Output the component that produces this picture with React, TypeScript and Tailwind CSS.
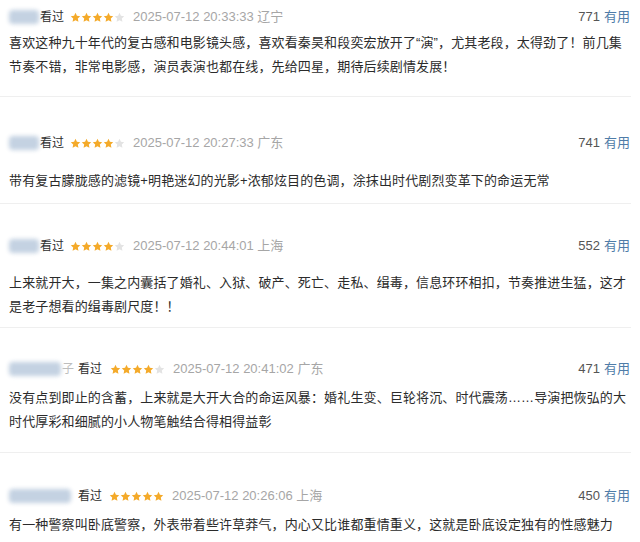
import React from "react";

type Review = {
  nameW: string;
  suffix?: string;
  seenMl: string;
  starsMl: string;
  stars: number;
  date: string;
  region: string;
  count: string;
  text: string;
  wrap: string;
  bodyMt: string;
};

const reviews: Review[] = [
  {
    nameW: "w-[30px]",
    seenMl: "ml-[1px]",
    starsMl: "ml-[6px]",
    stars: 4,
    date: "2025-07-12 20:33:33",
    region: "辽宁",
    count: "771",
    text: "喜欢这种九十年代的复古感和电影镜头感，喜欢看秦昊和段奕宏放开了“演”，尤其老段，太得劲了！前几集节奏不错，非常电影感，演员表演也都在线，先给四星，期待后续剧情发展！",
    wrap: "pt-[7px] pb-[17px] border-b border-[#efefef]",
    bodyMt: "mt-[4px]",
  },
  {
    nameW: "w-[30px]",
    seenMl: "ml-[1px]",
    starsMl: "ml-[6px]",
    stars: 4,
    date: "2025-07-12 20:27:33",
    region: "广东",
    count: "741",
    text: "带有复古朦胧感的滤镜+明艳迷幻的光影+浓郁炫目的色调，涂抹出时代剧烈变革下的命运无常",
    wrap: "pt-[36px] pb-[10px] border-b border-[#efefef]",
    bodyMt: "mt-[16px]",
  },
  {
    nameW: "w-[30px]",
    seenMl: "ml-[1px]",
    starsMl: "ml-[6px]",
    stars: 4,
    date: "2025-07-12 20:44:01",
    region: "上海",
    count: "552",
    text: "上来就开大，一集之内囊括了婚礼、入狱、破产、死亡、走私、缉毒，信息环环相扣，节奏推进生猛，这才是老子想看的缉毒剧尺度！！",
    wrap: "pt-[32px] pb-[8px] border-b border-[#efefef]",
    bodyMt: "mt-[15px]",
  },
  {
    nameW: "w-[52px]",
    suffix: "子",
    seenMl: "ml-[4px]",
    starsMl: "ml-[8px]",
    stars: 4,
    date: "2025-07-12 20:41:02",
    region: "广东",
    count: "471",
    text: "没有点到即止的含蓄，上来就是大开大合的命运风暴：婚礼生变、巨轮将沉、时代震荡……导演把恢弘的大时代厚彩和细腻的小人物笔触结合得相得益彰",
    wrap: "pt-[31px] pb-[18px] border-b border-[#efefef]",
    bodyMt: "mt-[7px]",
  },
  {
    nameW: "w-[62px]",
    seenMl: "ml-[7px]",
    starsMl: "ml-[7px]",
    stars: 5,
    date: "2025-07-12 20:26:06",
    region: "上海",
    count: "450",
    text: "有一种警察叫卧底警察，外表带着些许草莽气，内心又比谁都重情重义，这就是卧底设定独有的性感魅力",
    wrap: "pt-[33px]",
    bodyMt: "mt-[7px]",
  },
];

function Star({ filled }: { filled: boolean }) {
  return (
    <svg width="11" height="11" viewBox="0 0 24 24" className="shrink-0">
      <path
        d="M12 1.8l3.1 6.6 7.2.9-5.3 5 1.4 7.1L12 17.9l-6.4 3.5 1.4-7.1-5.3-5 7.2-.9z"
        fill={filled ? "#f4aa2a" : "#e3e3e3"}
      />
    </svg>
  );
}

export default function App() {
  return (
    <div className="w-[640px] h-[542px] overflow-hidden bg-white font-['Liberation_Sans','Noto_Sans_CJK_SC',sans-serif] text-[13px]">
      {reviews.map((r, i) => (
        <div key={i} className={`mr-[9px] pl-[9px] pr-[1px] ${r.wrap}`}>
          <div className="flex h-5 items-center leading-5">
            <div className="flex items-center">
              <div className={`h-[14px] ${r.nameW} rounded-[4px] bg-[#c4d2e2] blur-[2px]`} />
              {r.suffix ? (
                <span className="ml-[1px] text-[12px] text-[#bdbdbd]">{r.suffix}</span>
              ) : null}
            </div>
            <span className={`${r.seenMl} text-[12px] text-[#2e2e2e]`}>看过</span>
            <div className={`${r.starsMl} flex items-center`}>
              {[0, 1, 2, 3, 4].map((s) => (
                <Star key={s} filled={s < r.stars} />
              ))}
            </div>
            <span className="ml-[8px] text-[#a6a6a6]">
              {r.date} {r.region}
            </span>
            <div className="flex-1" />
            <span className="text-[#555555]">{r.count}</span>
            <span className="ml-[4px] text-[#4f7ca8]">有用</span>
          </div>
          <p className={`${r.bodyMt} leading-[24px] tracking-[0.13px] text-[#2b2b2b]`}>
            {r.text}
          </p>
        </div>
      ))}
    </div>
  );
}
